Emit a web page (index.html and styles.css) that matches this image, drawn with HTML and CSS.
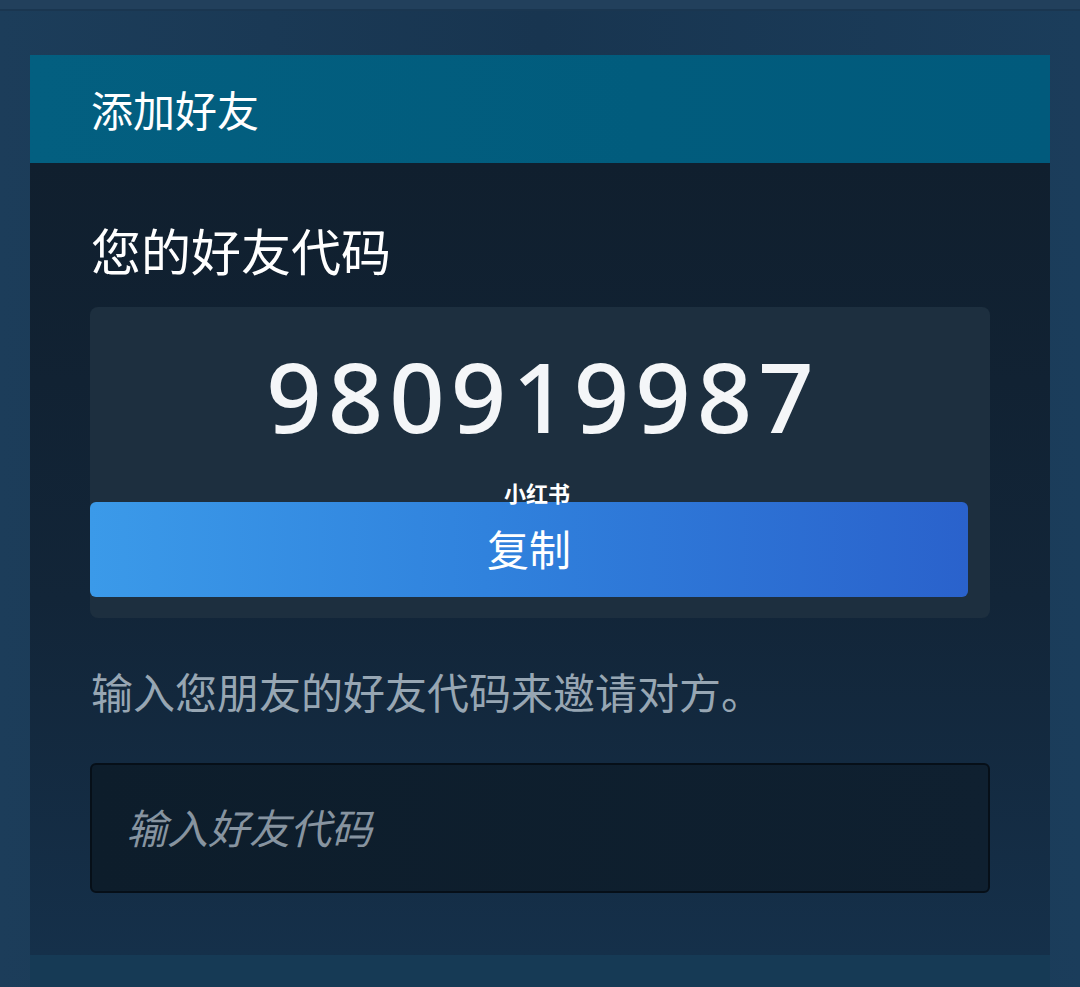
FILE: index.html
```html
<!DOCTYPE html>
<html lang="zh-CN">
<head>
<meta charset="utf-8">
<link rel="stylesheet" href="styles.css">
</head>
<body>
<div class="page">
  <div class="topbar"></div>
  <div class="panel">
    <div class="panel-header">添加好友</div>
    <div class="panel-body">
      <div class="section-title">您的好友代码</div>
      <div class="code-box">
        <div class="code">980919987</div>
        <div class="watermark">小红书</div>
        <button class="copy-btn">复制</button>
      </div>
      <div class="hint">输入您朋友的好友代码来邀请对方。</div>
      <div class="input-box"><span class="placeholder">输入好友代码</span></div>
    </div>
    <div class="panel-footer"></div>
  </div>
</div>
</body>
</html>
```
FILE: styles.css
```css
html, body {
  margin: 0;
  padding: 0;
}
body {
  width: 1080px;
  height: 987px;
  overflow: hidden;
  background: linear-gradient(90deg, #1c3d5a 0%, #183550 50%, #1b3d5b 100%);
  font-family: "Noto Sans", "Noto Sans CJK SC", sans-serif;
}
.page {
  display: flex;
  flex-direction: column;
}
.topbar {
  height: 9px;
  background: #22405c;
  border-bottom: 2px solid #1a3650;
  margin-bottom: 44px;
}
.panel {
  margin-left: 30px;
  width: 1020px;
  display: flex;
  flex-direction: column;
}
.panel-header {
  height: 108px;
  background: linear-gradient(90deg, #035f80 0%, #015c7d 60%, #015a7c 100%);
  color: #ffffff;
  font-family: "Noto Sans CJK SC", sans-serif;
  font-size: 42px;
  font-weight: 400;
  display: flex;
  align-items: center;
  padding-left: 61px;
  box-sizing: border-box;
  padding-bottom: 2px;
}
.panel-body {
  height: 792px;
  box-sizing: border-box;
  background: linear-gradient(180deg, #101f2e 0%, #122538 55%, #15304a 100%);
  padding: 56px 60px 0 60px;
  display: flex;
  flex-direction: column;
}
.section-title {
  color: #ffffff;
  font-family: "Noto Sans CJK SC", sans-serif;
  font-size: 50px;
  line-height: 60px;
  padding-left: 1px;
  margin-bottom: 28px;
}
.code-box {
  position: relative;
  height: 311px;
  box-sizing: border-box;
  background: #1d2f3f;
  border-radius: 8px;
  padding: 0 22px 21px 0;
  display: flex;
  flex-direction: column;
}
.code {
  color: #f4f6f8;
  font-family: "Noto Sans", sans-serif;
  font-size: 97px;
  font-weight: 500;
  letter-spacing: 6px;
  line-height: 120px;
  text-align: center;
  padding-top: 28px;
  padding-left: 28px;
  height: 195px;
  box-sizing: border-box;
}
.watermark {
  position: absolute;
  left: 414px;
  top: 172px;
  color: #ffffff;
  font-family: "Noto Sans CJK SC", sans-serif;
  font-weight: 700;
  font-size: 22px;
  line-height: 26px;
  letter-spacing: 0px;
  z-index: 2;
}
.copy-btn {
  height: 95px;
  border: none;
  border-radius: 6px;
  background: linear-gradient(90deg, #3b9ae9 0%, #3082dd 45%, #2a62cc 100%);
  color: #ffffff;
  font-family: "Noto Sans CJK SC", sans-serif;
  font-size: 42px;
  padding: 0 0 4px 0;
  cursor: pointer;
}
.hint {
  margin-top: 46px;
  color: #97a6b3;
  font-family: "Noto Sans CJK SC", sans-serif;
  font-size: 42px;
  line-height: 54px;
  padding-left: 1px;
}
.input-box {
  margin-top: 45px;
  height: 130px;
  box-sizing: border-box;
  border: 2px solid #060f18;
  border-radius: 6px;
  background: linear-gradient(90deg, #0d1d2b 0%, #0f2030 100%);
  display: flex;
  align-items: center;
  padding-left: 34px;
}
.placeholder {
  color: #8794a0;
  font-family: "Noto Sans CJK SC", sans-serif;
  font-style: italic;
  font-size: 41px;
  padding-bottom: 4px;
}
.panel-footer {
  height: 32px;
  background: #163a55;
}
```
